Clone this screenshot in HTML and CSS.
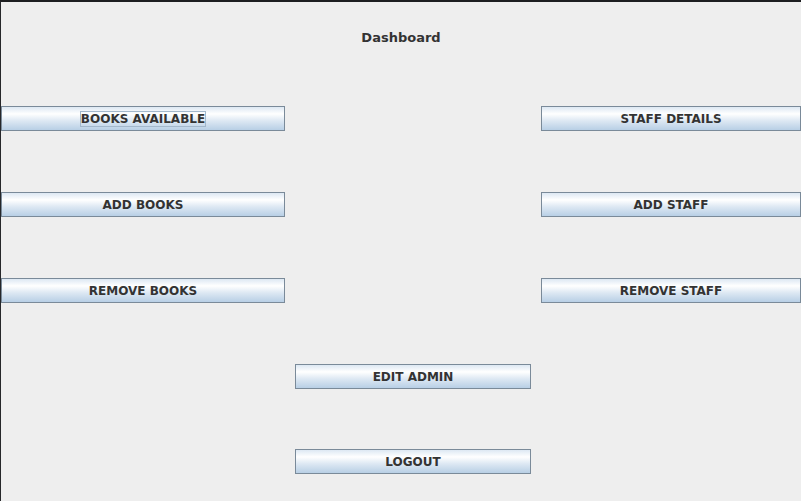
FILE: index.html
```html
<!DOCTYPE html>
<html>
<head>
<meta charset="utf-8">
<link rel="stylesheet" href="styles.css">
</head>
<body>
<div class="frame">
  <div class="title">Dashboard</div>
  <div class="grid">
    <button class="btn left r1"><span class="focus">BOOKS AVAILABLE</span></button>
    <button class="btn right r1">STAFF DETAILS</button>
    <button class="btn left r2">ADD BOOKS</button>
    <button class="btn right r2">ADD STAFF</button>
    <button class="btn left r3">REMOVE BOOKS</button>
    <button class="btn right r3">REMOVE STAFF</button>
    <button class="btn center r4">EDIT ADMIN</button>
    <button class="btn center r5 logout">LOGOUT</button>
  </div>
</div>
</body>
</html>
```
FILE: styles.css
```css
html, body {
  margin: 0;
  padding: 0;
  background: #eeeeee;
}
.frame {
  box-sizing: border-box;
  width: 801px;
  height: 501px;
  border-top: 2px solid #1d1e20;
  border-left: 1px solid #26272a;
  background: #eeeeee;
  overflow: hidden;
  font-family: "DejaVu Sans", sans-serif;
  color: #333333;
}
.title {
  padding-top: 28px;
  height: 16px;
  line-height: 16px;
  font-size: 13px;
  font-weight: bold;
  text-align: center;
}
.grid {
  margin-top: 60px;
  display: grid;
  grid-template-columns: 284px 236px 260px;
  grid-template-rows: repeat(5, 25px);
  column-gap: 10px;
  row-gap: 61px;
}
.btn {
  box-sizing: border-box;
  height: 25px;
  margin: 0;
  padding: 0;
  border: 1px solid #7a8a99;
  background: linear-gradient(to bottom, #dde8f3 0%, #ffffff 30%, #dde8f3 60%, #b8cfe5 100%);
  font-family: "DejaVu Sans", sans-serif;
  font-size: 12px;
  font-weight: bold;
  color: #333333;
  line-height: 16px;
  text-align: center;
}
.left { grid-column: 1; }
.center { grid-column: 2; }
.right { grid-column: 3; }
.r1 { grid-row: 1; }
.r2 { grid-row: 2; }
.r3 { grid-row: 3; }
.r4 { grid-row: 4; }
.r5 { grid-row: 5; }
.logout { margin-top: -1px; }
.focus {
  display: inline-block;
  border: 1px solid #a3b8cc;
  padding: 0;
  line-height: 14px;
}
```
